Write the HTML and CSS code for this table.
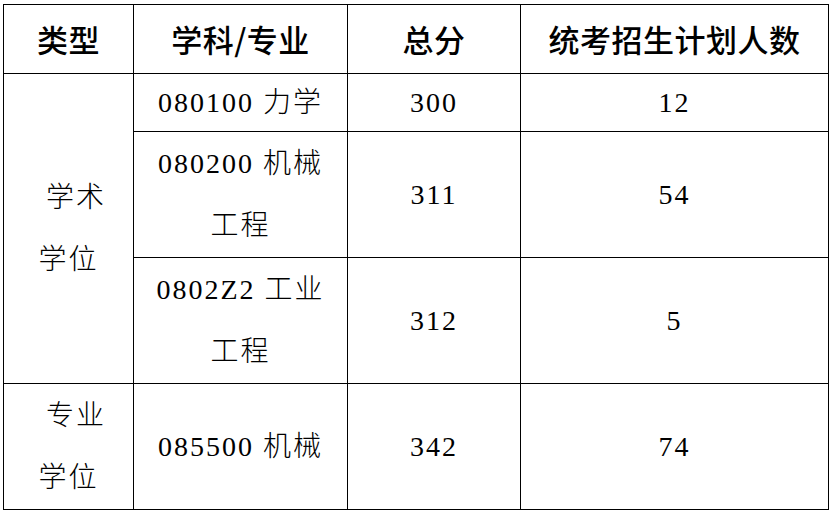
FILE: index.html
```html
<!DOCTYPE html>
<html>
<head>
<meta charset="utf-8">
<title>招生计划</title>
<link rel="stylesheet" href="styles.css">
</head>
<body>
<table class="plan">
  <colgroup>
    <col class="c-type">
    <col class="c-major">
    <col class="c-score">
    <col class="c-count">
  </colgroup>
  <thead>
    <tr class="head-row">
      <th>类型</th>
      <th>学科/专业</th>
      <th>总分</th>
      <th>统考招生计划人数</th>
    </tr>
  </thead>
  <tbody>
    <tr class="row-short">
      <td class="type-cell" rowspan="3"><span class="cjk first-line">学术</span><br><span class="cjk">学位</span></td>
      <td><span class="num">080100</span> <span class="cjk">力学</span></td>
      <td><span class="num">300</span></td>
      <td><span class="num">12</span></td>
    </tr>
    <tr class="row-tall">
      <td><span class="num">080200</span> <span class="cjk">机械</span><br><span class="cjk">工程</span></td>
      <td><span class="num">311</span></td>
      <td><span class="num">54</span></td>
    </tr>
    <tr class="row-tall">
      <td><span class="num">0802Z2</span> <span class="cjk">工业</span><br><span class="cjk">工程</span></td>
      <td><span class="num">312</span></td>
      <td><span class="num">5</span></td>
    </tr>
    <tr class="row-tall">
      <td class="type-cell"><span class="cjk first-line">专业</span><br><span class="cjk">学位</span></td>
      <td><span class="num">085500</span> <span class="cjk">机械</span></td>
      <td><span class="num">342</span></td>
      <td><span class="num">74</span></td>
    </tr>
  </tbody>
</table>
</body>
</html>
```

FILE: styles.css
```css
html, body {
  margin: 0;
  padding: 0;
  background: #ffffff;
}

body {
  padding: 4px 0 0 3px;
}

.plan {
  border-collapse: collapse;
  table-layout: fixed;
  width: 825px;
  color: #000;
}

.c-type { width: 130px; }
.c-major { width: 214px; }
.c-score { width: 173px; }
.c-count { width: 308px; }

.plan th,
.plan td {
  border: 1px solid #000;
  padding: 0;
  text-align: center;
  vertical-align: middle;
}

.plan th {
  font-family: "Noto Sans CJK SC", "Noto Sans", sans-serif;
  font-weight: 500;
  font-size: 31px;
  letter-spacing: 0.5px;
  height: 68px;
  line-height: 40px;
}

.plan td {
  font-family: "Liberation Serif", Tinos, "Noto Serif", "DejaVu Serif", FreeSerif, Times, serif;
  font-size: 28px;
  letter-spacing: 2px;
  line-height: 62px;
}

.num {
  font-family: "Liberation Serif", Tinos, "Noto Serif", "DejaVu Serif", FreeSerif, Times, serif;
  font-weight: normal;
  font-style: normal;
  line-height: 30px;
}

.cjk {
  font-family: "Noto Sans CJK SC", sans-serif;
  font-weight: 300;
  letter-spacing: 2px;
  line-height: 30px;
}

.row-short td {
  height: 57px;
}

.row-short td:not(.type-cell) {
  line-height: 56px;
}

.row-tall td {
  height: 125px;
}

.first-line {
  padding-left: 15px;
}
```
